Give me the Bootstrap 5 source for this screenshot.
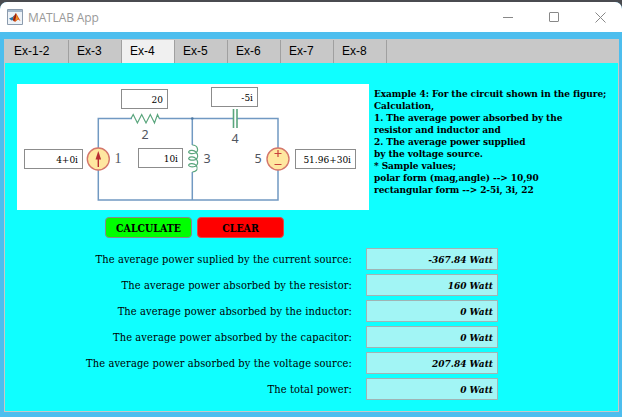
<!DOCTYPE html>
<html lang="en">
<head>
<meta charset="utf-8">
<meta name="viewport" content="width=device-width, initial-scale=1">
<title>MATLAB App</title>
<link href="https://cdn.jsdelivr.net/npm/bootstrap@5.3.0/dist/css/bootstrap.min.css" rel="stylesheet">
<style>
  body { background: #4a4b50; font-family: "DejaVu Serif Condensed", "DejaVu Serif", serif; font-stretch: condensed; color: #000; width: 622px; height: 417px; }
  .app-window { margin-top: 2px; height: 415px; background: #4dbeee; border-radius: 7px 7px 0 0; }
  .titlebar { height: 30px; background: #fff; padding: 0 16px 0 7px; font: 12px "Open Sans", sans-serif; color: #999; }
  .titlebar-name { margin-left: 5px; letter-spacing: -.14px; }
  .win-controls { gap: 35px; }
  .tab-frame { margin: 7px 3px 0 4px; height: 373px; border: 1px solid #c8c8c8; }
  .tabs-strip { height: 23px; background: #c8c8c8; font: 12px "Liberation Sans", sans-serif; }
  .tabs-strip .nav-link { width: 53px; height: 23px; padding: 0 0 0 8px; line-height: 23px; color: #000; border-right: 1px solid #a0a0a0; border-radius: 0; }
  .tabs-strip .nav-link.wide-tab { width: 64px; padding-left: 9px; }
  .tabs-strip .nav-link.active { background: #f0f0f0; color: #000; }
  .tab-body { height: 348px; background: #0fffff; padding: 21px 0 0 12px; }
  .circuit { width: 352px; height: 126px; background: #fff; }
  .circuit input { position: absolute; height: 20px; border: 1px solid #8c8c8c; border-radius: 0; padding: 1px 4px 0 0; text-align: right; font-family: inherit; font-stretch: inherit; font-size: 10px; line-height: 17px; min-height: 0; color: #000; }
  .circuit .in-1 { left: 7px; top: 65px; width: 59px; }
  .circuit .in-2 { left: 104px; top: 5px; width: 47px; }
  .circuit .in-3 { left: 121px; top: 64px; width: 45px; }
  .circuit .in-4 { left: 194px; top: 3px; width: 47px; }
  .circuit .in-5 { left: 278px; top: 65px; width: 61px; }
  .notes { margin: 4px 0 0 5px; font-size: 10px; line-height: 12px; letter-spacing: -.08px; font-weight: 700; white-space: nowrap; }
  .actions { margin: 7px 0 0 88px; gap: 5px; }
  .actions .btn { width: 87px; height: 21px; padding: 1px 0 0; font-family: inherit; font-size: 10.5px; font-weight: 700; line-height: 18px; border-radius: 4px; border: 1px solid #8a8a8a; color: #000; }
  .actions .go { background: #0f0; }
  .actions .wipe { background: #f00; border-color: #e04848; }
  .results { margin-top: 10px; gap: 4px; width: 481px; }
  .result-row { height: 22px; gap: 14px; }
  .result-row label { font-size: 11px; line-height: 24px; letter-spacing: .11px; white-space: nowrap; }
  .result-row output { width: 132px; height: 22px; border: 1px solid #a0b4b4; background: #a2f5f5; padding-right: 4px; text-align: right; font-size: 10px; font-weight: 700; font-style: italic; line-height: 22px; }
</style>
</head>
<body class="overflow-hidden">
<div class="app-window overflow-hidden">
  <header class="titlebar d-flex align-items-center">
    <svg width="16" height="16" viewBox="0 0 16 16"><path d="M.5.5h15v15H.5z" fill="#eef3f8" stroke="#8b9bad"/><path d="M1 1h14v2H1z" fill="#a5b8cc"/><path d="m2 9.500 3.500-1.500L8 5.500 6.500 11l-2 .5z" fill="#2b73a5"/><path d="m6 8.500 3-4.500 4.500 8-2.500-1.500L8 13l-2-2z" fill="#d95b19"/><path d="m8.800 4 .2 4-2 4.500L6 11z" fill="#8d1b15"/><path d="m9.500 6 1.300 3.500-1.800 2z" fill="#f8a825"/></svg>
    <span class="titlebar-name">MATLAB App</span>
    <div class="win-controls d-flex ms-auto">
      <svg width="11" height="11"><path d="M0 5.500h10" stroke="#888"/></svg>
      <svg width="11" height="11"><rect x=".5" y=".5" width="9" height="9" rx=".5" fill="none" stroke="#888"/></svg>
      <svg width="11" height="11"><path d="m.5.5 10 10m0-10-10 10" stroke="#888"/></svg>
    </div>
  </header>
  <main class="tab-frame">
    <nav class="nav tabs-strip">
      <a class="nav-link wide-tab">Ex-1-2</a><a class="nav-link">Ex-3</a><a class="nav-link active">Ex-4</a><a class="nav-link">Ex-5</a><a class="nav-link">Ex-6</a><a class="nav-link">Ex-7</a><a class="nav-link">Ex-8</a>
    </nav>
    <section class="tab-body">
      <div class="d-flex">
        <div class="circuit position-relative flex-shrink-0">
          <svg class="d-block" width="352" height="126" viewBox="17 84 352 126" fill="none">
            <g stroke="#7199c2" stroke-width="1.500">
              <path d="M98.300 148v-29.500H132M159 118.500h74.500M237 118.500h41V148M278 170v30H98.300v-30M192.300 118.500V145M192.300 172v28"/>
            </g>
            <g stroke="#5aa67d" stroke-width="1.200">
              <path d="m131 118.500 2.200-4 4.200 8.500 4.300-8.500 4.300 8.500 4.300-8.500 4.200 8.500 3-8.500 1.800 4"/>
              <path d="M233.500 109v19M237 109v19" stroke-width="1.600"/>
              <path d="M192.300 145C198 145 199 151 195.500 153C191 154.500 188 153 188.800 151.500C190 149.800 194 150 196 152C198.500 155 198 158.500 195.500 159.600C191 161 188 159.600 188.800 158.100C190 156.400 194 156.600 196 158.600C198.500 161.600 198 165 195.500 166.200C191 167.600 188 166.200 188.800 164.700C190 163 194 163.200 196 165.200C198.500 168.500 197 172 192.300 172"/>
            </g>
            <circle cx="98.300" cy="159" r="11" fill="#ffe7a0" stroke="#d5776b" stroke-width="1.400"/>
            <path d="M98.300 167v-10" stroke="#b92c31" stroke-width="1.400"/><path d="m98.300 151-2.800 8.500h5.600z" fill="#b92c31"/>
            <circle cx="278" cy="159" r="11" fill="#ffe7a0" stroke="#d5776b" stroke-width="1.400"/>
            <path d="M274.500 153.500h7M278 150v7M274.500 164.500h7" stroke="#c9413c" stroke-width="1.200"/>
            <circle cx="192.300" cy="118.500" r="1.300" fill="#4d78a3"/>
            <g fill="#505560" font-family="Noto Sans, sans-serif" font-size="12.500" text-anchor="middle">
              <text x="145" y="139">2</text><text x="118" y="163" font-family="Liberation Serif, serif" font-size="14">1</text><text x="207" y="163">3</text><text x="235" y="143">4</text><text x="258" y="163">5</text>
            </g>
          </svg>
          <input class="in-1" value="4+0i" aria-label="Current source">
          <input class="in-2" value="20" aria-label="Resistor">
          <input class="in-3" value="10i" aria-label="Inductor">
          <input class="in-4" value="-5i" aria-label="Capacitor">
          <input class="in-5" value="51.96+30i" aria-label="Voltage source">
        </div>
        <div class="notes">
          <div>Example 4: For the circuit shown in the figure;</div>
          <div>Calculation,</div>
          <div>1. The average power absorbed by the</div>
          <div>resistor and inductor and</div>
          <div>2. The average power supplied</div>
          <div>by the voltage source.</div>
          <div>* Sample values;</div>
          <div>polar form (mag,angle) --&gt; 10,90</div>
          <div>rectangular form --&gt; 2-5i, 3i, 22</div>
        </div>
      </div>
      <div class="actions d-flex"><button class="btn go">CALCULATE</button><button class="btn wipe">CLEAR</button></div>
      <div class="results d-flex flex-column">
        <div class="result-row d-flex justify-content-end"><label>The average power suplied by the current source:</label><output>-367.84 Watt</output></div>
        <div class="result-row d-flex justify-content-end"><label>The average power absorbed by the resistor:</label><output>160 Watt</output></div>
        <div class="result-row d-flex justify-content-end"><label>The average power absorbed by the inductor:</label><output>0 Watt</output></div>
        <div class="result-row d-flex justify-content-end"><label>The average power absorbed by the capacitor:</label><output>0 Watt</output></div>
        <div class="result-row d-flex justify-content-end"><label>The average power absorbed by the voltage source:</label><output>207.84 Watt</output></div>
        <div class="result-row d-flex justify-content-end"><label>The total power:</label><output>0 Watt</output></div>
      </div>
    </section>
  </main>
</div>
<script src="https://cdn.jsdelivr.net/npm/bootstrap@5.3.0/dist/js/bootstrap.bundle.min.js"></script>
</body>
</html>
